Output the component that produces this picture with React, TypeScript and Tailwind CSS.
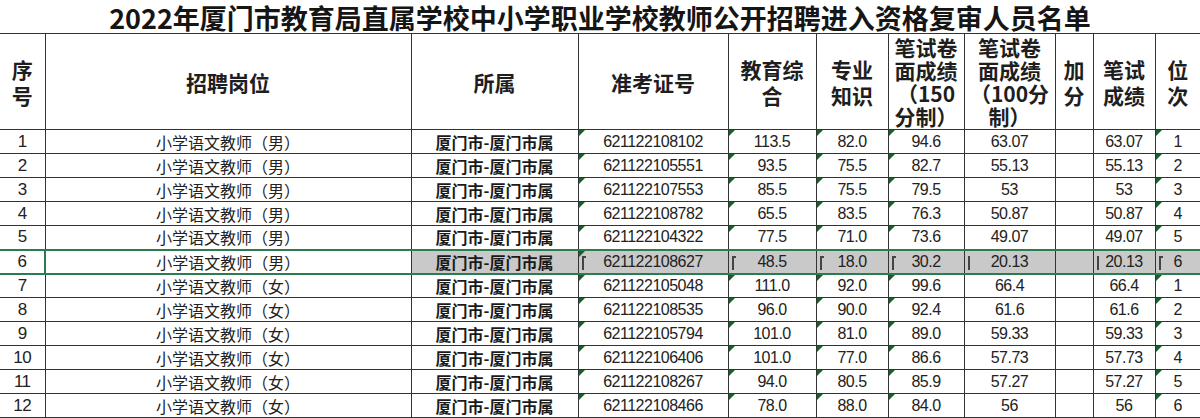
const rows = [
  ['1', '男', '621122108102', '113.5', '82.0', '94.6', '63.07', '63.07', '1'],
  ['2', '男', '621122105551', '93.5', '75.5', '82.7', '55.13', '55.13', '2'],
  ['3', '男', '621122107553', '85.5', '75.5', '79.5', '53', '53', '3'],
  ['4', '男', '621122108782', '65.5', '83.5', '76.3', '50.87', '50.87', '4'],
  ['5', '男', '621122104322', '77.5', '71.0', '73.6', '49.07', '49.07', '5'],
  ['6', '男', '621122108627', '48.5', '18.0', '30.2', '20.13', '20.13', '6'],
  ['7', '女', '621122105048', '111.0', '92.0', '99.6', '66.4', '66.4', '1'],
  ['8', '女', '621122108535', '96.0', '90.0', '92.4', '61.6', '61.6', '2'],
  ['9', '女', '621122105794', '101.0', '81.0', '89.0', '59.33', '59.33', '3'],
  ['10', '女', '621122106406', '101.0', '77.0', '86.6', '57.73', '57.73', '4'],
  ['11', '女', '621122108267', '94.0', '80.5', '85.9', '57.27', '57.27', '5'],
  ['12', '女', '621122108466', '78.0', '88.0', '84.0', '56', '56', '6'],
]

const SELECTED = '6'

// green "number stored as text" corner mark
function Tri() {
  return (
    <span className="absolute left-0 top-0 h-0 w-0 border-t-[6px] border-r-[6px] border-t-[#17602c] border-r-transparent" />
  )
}

// the dark bracket the selection draws at the left of some cells
function Bracket({ tick = true }: { tick?: boolean }) {
  return (
    <span
      className={
        tick
          ? 'absolute left-[3px] top-[5px] h-[14px] w-[4px] border-l-2 border-t-2 border-[#444]'
          : 'absolute left-[3px] top-[5px] h-[14px] w-[2px] border-l-2 border-[#444]'
      }
    />
  )
}

export default function App() {
  const cjk = "font-['Noto_Sans_CJK_SC',sans-serif]"
  const num = "font-['Liberation_Sans','Noto_Sans_CJK_SC',sans-serif] tracking-[-0.5px]"
  const th = 'border border-[#333] p-0 font-bold'

  return (
    <div className="h-[418px] w-[1200px] overflow-hidden bg-white text-[#222]">
      <div className={`flex h-[33px] items-center justify-center pt-[2px] text-[27px] font-bold leading-[31px] text-[#151515] ${cjk}`}>
        2022年厦门市教育局直属学校中小学职业学校教师公开招聘进入资格复审人员名单
      </div>

      <table className="w-[1200px] table-fixed border-collapse">
        <colgroup>
          <col className="w-[45px]" />
          <col className="w-[366px]" />
          <col className="w-[167px]" />
          <col className="w-[150px]" />
          <col className="w-[88px]" />
          <col className="w-[72px]" />
          <col className="w-[76px]" />
          <col className="w-[91px]" />
          <col className="w-[38px]" />
          <col className="w-[62px]" />
          <col className="w-[45px]" />
        </colgroup>
        <thead>
          <tr className={`h-[96px] text-center text-[21px] font-bold leading-[26px] text-[#1e1e1e] ${cjk}`}>
            <th className={`${th} border-l-0`}>序<br />号</th>
            <th className={th}>招聘岗位</th>
            <th className={th}>所属</th>
            <th className={th}>准考证号</th>
            <th className={th}>教育综<br />合</th>
            <th className={th}>专业<br />知识</th>
            <th className={`${th} leading-[23px]`}>笔试卷<br />面成绩<br />（150<br />分制）</th>
            <th className={`${th} leading-[23px]`}>笔试卷<br />面成绩<br />（100分<br />制）</th>
            <th className={th}>加<br />分</th>
            <th className={th}>笔试<br />成绩</th>
            <th className={`${th} border-r-0`}>位<br />次</th>
          </tr>
        </thead>
        <tbody>
          {rows.map(([no, sex, id, a, b, c, d, total, rank]) => {
            const sel = no === SELECTED
            const base = sel
              ? 'relative h-[24px] border border-y-2 border-[#333] border-y-[#2b7d50] p-0 text-center'
              : 'relative h-[24px] border border-[#333] p-0 text-center'
            const fill = sel ? ' bg-[#c9c9c9]' : ''
            return (
              <tr key={no} className="h-[24px] text-[16px] leading-[22px]">
                <td className={`${base} border-l-0 text-[17px] ${num}`}>{no}</td>
                <td className={`${base} ${cjk} ${sel ? 'border-l-2 border-l-[#2b7d50]' : ''}`}>
                  小学语文教师（{sex}）
                </td>
                <td className={`${base}${fill} font-semibold text-[#1a1a1a] ${cjk}`}>厦门市-厦门市属</td>
                <td className={`${base}${fill} ${num}`}>
                  <Tri />
                  {sel && <Bracket />}
                  {id}
                </td>
                <td className={`${base}${fill} ${num}`}>
                  {sel ? <Bracket /> : <Tri />}
                  {a}
                </td>
                <td className={`${base}${fill} ${num}`}>
                  {sel ? <Bracket /> : <Tri />}
                  {b}
                </td>
                <td className={`${base}${fill} ${num}`}>
                  {sel ? <Bracket /> : <Tri />}
                  {c}
                </td>
                <td className={`${base}${fill} ${num}`}>
                  {sel && <Bracket tick={false} />}
                  {d}
                </td>
                <td className={`${base}${fill}`} />
                <td className={`${base}${fill} ${num}`}>
                  {sel && <Bracket tick={false} />}
                  {total}
                </td>
                <td className={`${base}${fill} border-r-0 ${num}`}>
                  {sel ? <Bracket /> : <Tri />}
                  {rank}
                </td>
              </tr>
            )
          })}
        </tbody>
      </table>
    </div>
  )
}
